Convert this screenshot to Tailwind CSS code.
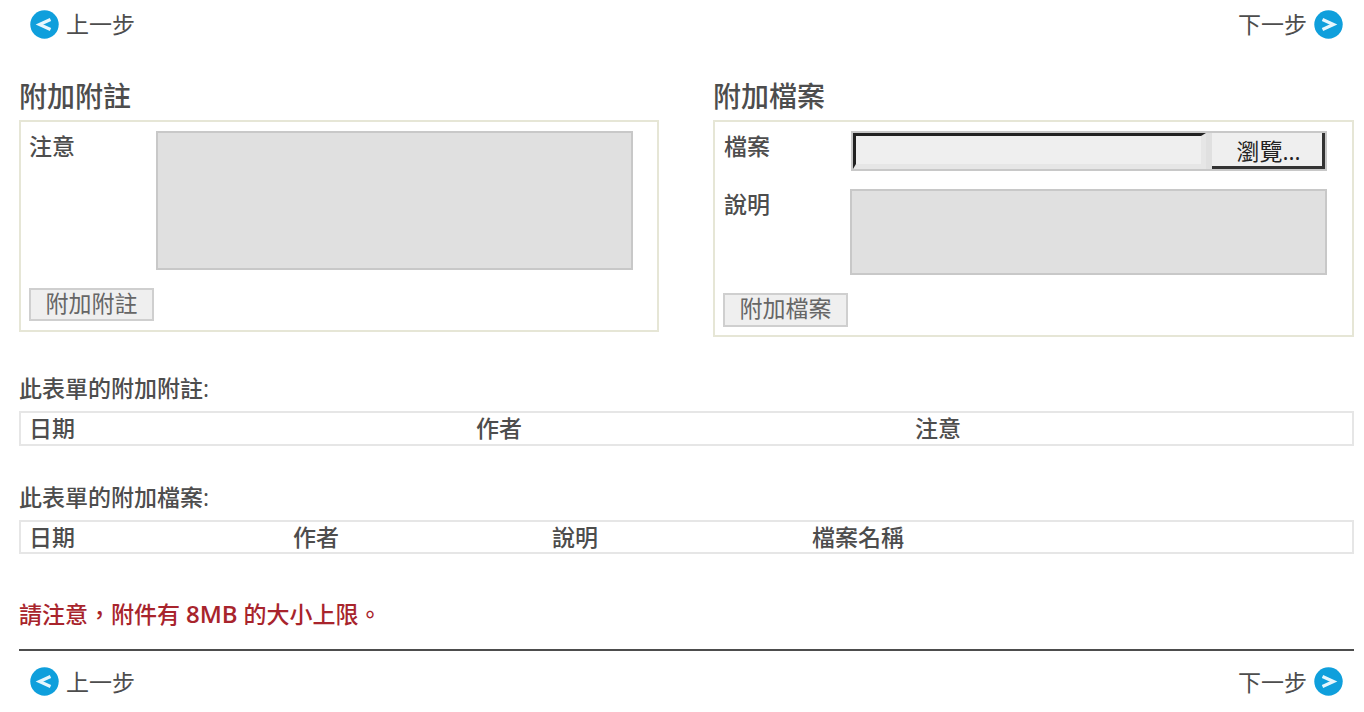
<!DOCTYPE html>
<html lang="zh-Hant"><head><meta charset="utf-8"><script src="https://cdn.jsdelivr.net/npm/@tailwindcss/browser@4"></script></head>
<body class="bg-white overflow-hidden">
<div class="w-[1364px] h-[712px] pl-[19px] pr-[10px] text-[#4d4d4d] text-[23px] leading-[30px] font-['Open_Sans','Noto_Sans_CJK_TC',sans-serif]">
  <div class="h-[48px] pl-[11px] pr-[11px] flex justify-between items-center">
    <a class="flex items-center gap-[7px]"><svg class="w-[29px] h-[29px]" viewBox="0 0 29 29"><circle cx="14.5" cy="14.5" r="14.2" fill="#0f9fdc"/><path d="M20.5 9.5 L9.5 14.5 L20.5 19.5" fill="none" stroke="#e6f6fd" stroke-width="3.2"/></svg><span class="-mt-[1px]">上一步</span></a>
    <a class="flex items-center gap-[7px]"><span class="-mt-[1px]">下一步</span><svg class="w-[29px] h-[29px]" viewBox="0 0 29 29"><circle cx="14.5" cy="14.5" r="14.2" fill="#0f9fdc"/><path d="M8.5 9.5 L19.5 14.5 L8.5 19.5" fill="none" stroke="#e6f6fd" stroke-width="3.2"/></svg></a>
  </div>
  <div class="flex justify-between items-start mt-[28px]">
    <section class="w-[640px]">
      <h2 class="text-[28px] leading-[40px] font-medium mb-[4px]">附加附註</h2>
      <div class="border-2 border-[#e6e6d6] h-[212px] pl-[9px] pt-[9px]">
        <div class="flex">
          <label class="w-[126px] font-medium -ml-[1px] mr-[1px]">注意</label>
          <div class="w-[477px] h-[139px] bg-[#e0e0e0] border-2 border-[#c8c8c8]"></div>
        </div>
        <button class="block mt-[18px] -ml-[1px] w-[125px] h-[33px] pb-[4px] bg-[#efefef] border-2 border-[#cfcfcf] text-[23px] leading-[26px] text-[#666]">附加附註</button>
      </div>
    </section>
    <section class="w-[641px]">
      <h2 class="text-[28px] leading-[40px] font-medium mb-[4px]">附加檔案</h2>
      <div class="border-2 border-[#e6e6d6] h-[217px] pl-[9px] pt-[9px]">
        <div class="flex">
          <label class="w-[127px] font-medium">檔案</label>
          <div class="w-[476px] h-[40px] flex bg-[#c8c8c8] p-[2px]">
            <div class="w-[353px] h-[36px] bg-[#efefef] border-t-[3px] border-l-[3px] border-[#222] border-b-[5px] border-r-[5px] border-b-[#e6e6e6] border-r-[#e6e6e6]"></div>
            <div class="w-[6px] bg-[#e0e0e0]"></div>
            <button class="w-[113px] h-[36px] pt-[3px] pl-[3px] bg-[#efefef] border-b-[3px] border-r-[3px] border-[#333] text-[23px] leading-[30px] text-[#222]">瀏覽...</button>
          </div>
        </div>
        <div class="flex mt-[18px]">
          <label class="w-[126px] font-medium">說明</label>
          <div class="w-[477px] h-[86px] bg-[#e0e0e0] border-2 border-[#c8c8c8]"></div>
        </div>
        <button class="block mt-[18px] -ml-[1px] w-[125px] h-[34px] pb-[4px] bg-[#efefef] border-2 border-[#cfcfcf] text-[23px] leading-[26px] text-[#666]">附加檔案</button>
      </div>
    </section>
  </div>
  <h3 class="mt-[36px] leading-[30px] font-medium">此表單的附加附註:</h3>
  <div class="mt-[8px] h-[35px] border-2 border-[#e6e6e6] pl-[8px] pb-[2px] flex items-center font-medium">
    <span class="w-[447px]">日期</span><span class="w-[439px]">作者</span><span>注意</span>
  </div>
  <h3 class="mt-[36px] leading-[30px] font-medium">此表單的附加檔案:</h3>
  <div class="mt-[8px] h-[34px] border-2 border-[#e6e6e6] pl-[8px] flex items-center font-medium">
    <span class="w-[264px]">日期</span><span class="w-[259px]">作者</span><span class="w-[260px]">說明</span><span>檔案名稱</span>
  </div>
  <p class="mt-[45px] leading-[30px] font-medium text-[#a8242c]">請注意，附件有 <span class="font-semibold text-[24px]">8MB</span> 的大小上限。</p>
  <div class="mt-[20px] border-t-2 border-[#4d4d4d] h-[62px] pt-[1px] pl-[11px] pr-[11px] flex justify-between items-center">
    <a class="flex items-center gap-[7px]"><svg class="w-[29px] h-[29px]" viewBox="0 0 29 29"><circle cx="14.5" cy="14.5" r="14.2" fill="#0f9fdc"/><path d="M20.5 9.5 L9.5 14.5 L20.5 19.5" fill="none" stroke="#e6f6fd" stroke-width="3.2"/></svg><span>上一步</span></a>
    <a class="flex items-center gap-[7px]"><span>下一步</span><svg class="w-[29px] h-[29px]" viewBox="0 0 29 29"><circle cx="14.5" cy="14.5" r="14.2" fill="#0f9fdc"/><path d="M8.5 9.5 L19.5 14.5 L8.5 19.5" fill="none" stroke="#e6f6fd" stroke-width="3.2"/></svg></a>
  </div>
</div>
</body></html>
